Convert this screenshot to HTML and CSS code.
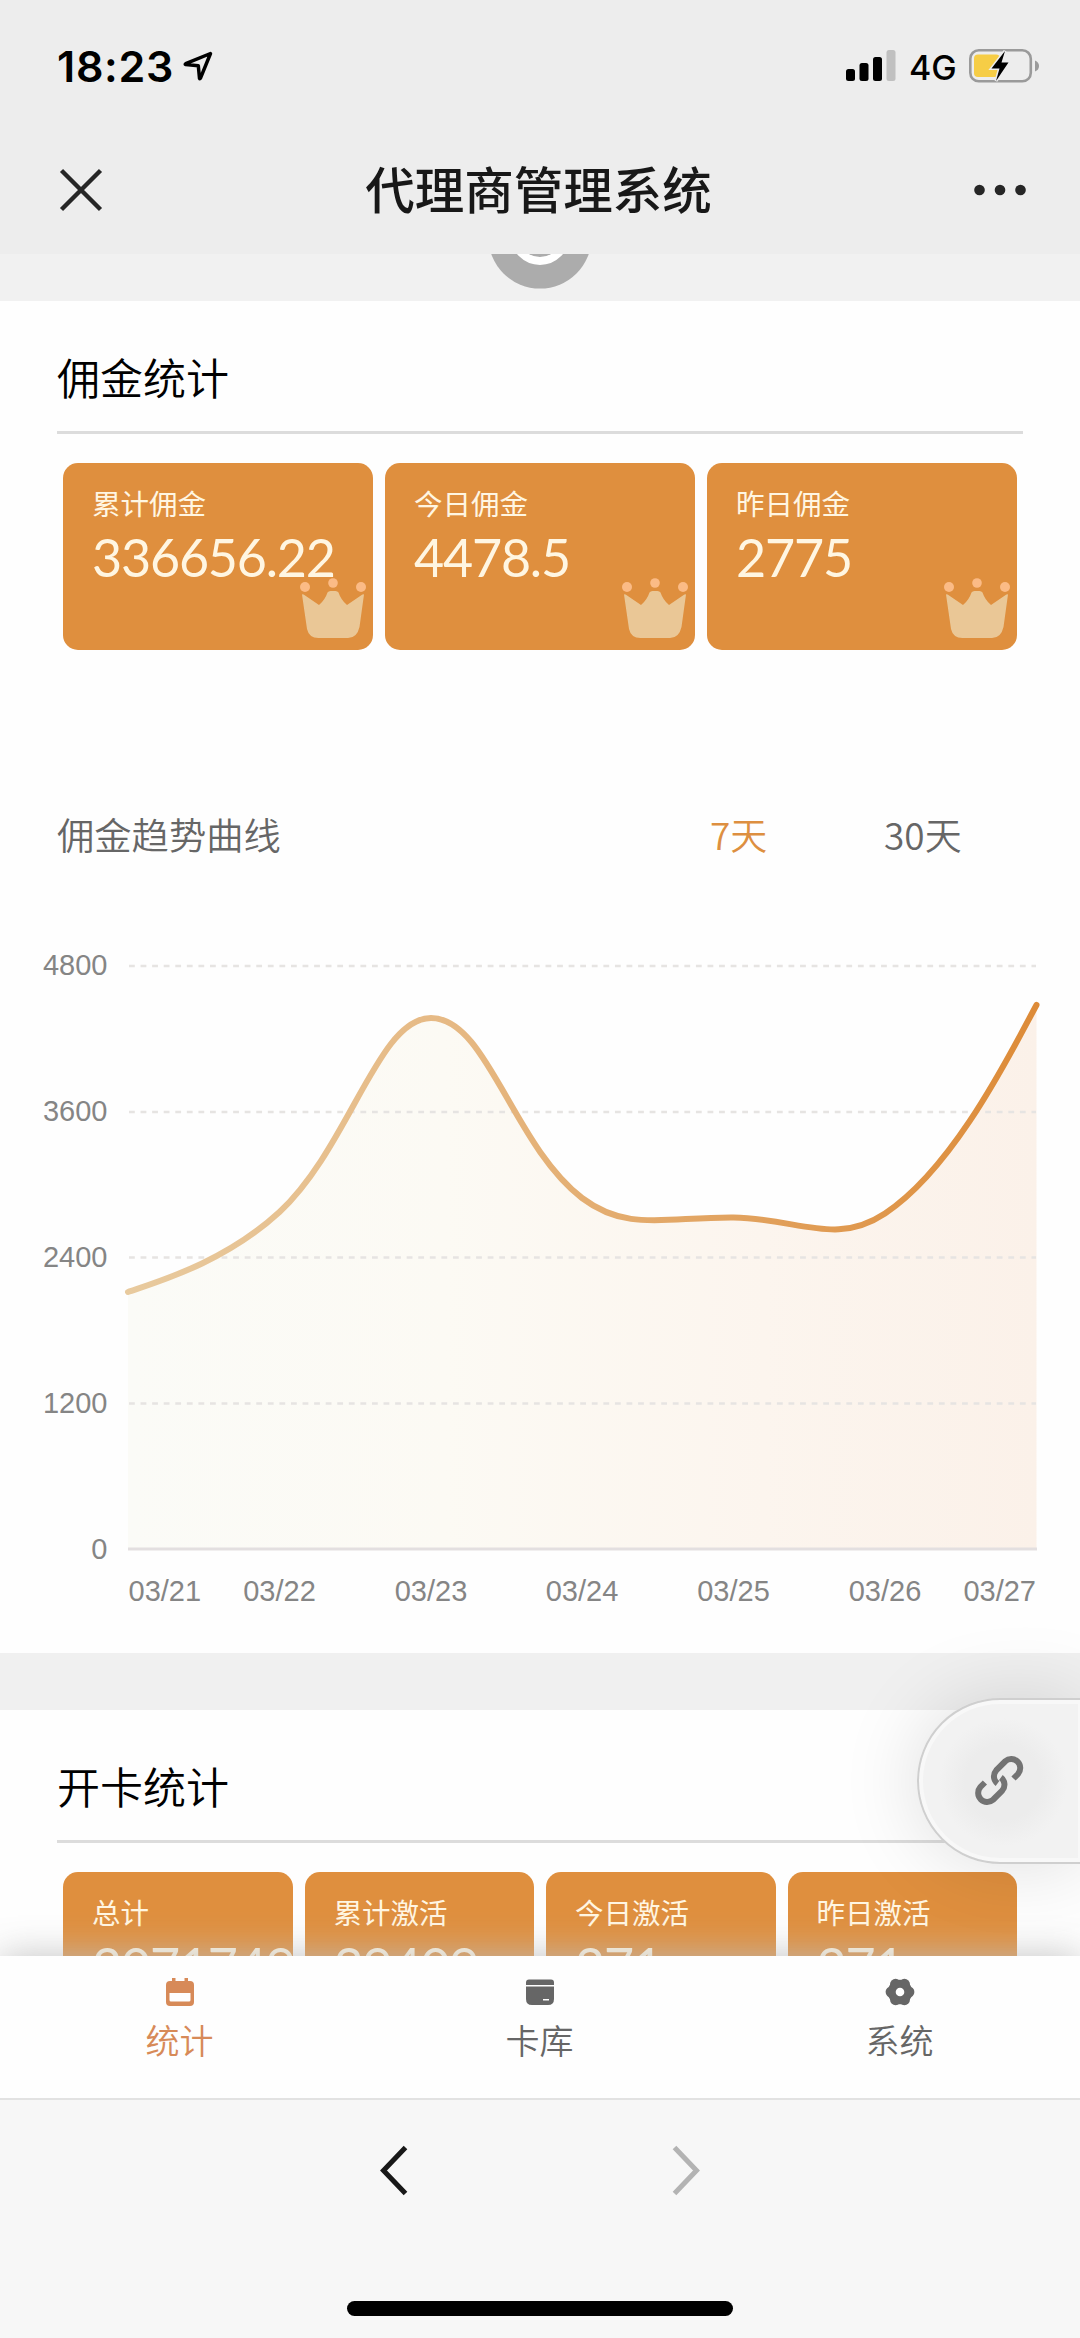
FILE: index.html
```html
<!DOCTYPE html>
<html lang="zh-CN">
<head>
<meta charset="utf-8">
<title>代理商管理系统</title>
<link rel="stylesheet" href="styles.css">
</head>
<body>
<svg class="defs" width="0" height="0" aria-hidden="true">
  <symbol id="crown" viewBox="0 0 68 62">
    <g class="crown-dots"><circle cx="6" cy="10" r="5"/><circle cx="34" cy="6" r="4.8"/><circle cx="62" cy="10" r="5"/></g>
    <path class="crown-body" d="M3 17.5q1-.8 2 .2L20 28q6-5 8.500-12.500 1-1.500 3-1.500h5q2 0 3 1.500Q42 23 48 28l15-10.300q1-1 2-.2L60.500 50Q58 61 49 61H19.500Q10 61 8 52Z"/>
  </symbol>
</svg>
<div class="phone">
  <header class="top">
    <div class="status">
      <div class="clock">
        <span class="time">18:23</span>
        <svg class="locate" width="30" height="30" viewBox="0 0 30 30"><path d="M27.500 2.500 2.700 12.700q-1 .6 0 .9L15.300 14.700 16.500 27.300q.4 1 .9 0Z"/></svg>
      </div>
      <div class="indicators">
        <svg class="signal" width="50" height="32" viewBox="0 0 50 32"><rect x="0" y="19" width="9" height="12" rx="2.500"/><rect x="13.500" y="13" width="9" height="18" rx="2.500"/><rect x="27" y="7" width="9" height="24" rx="2.500"/><rect class="weak" x="40.500" y="0" width="9" height="31" rx="2.500"/></svg>
        <span class="net">4G</span>
        <svg class="battery" width="72" height="36" viewBox="0 0 72 36"><rect class="shell" x="1.300" y="2.300" width="60.500" height="31" rx="8.500"/><rect class="charge" x="5" y="6.500" width="26" height="22.500" rx="4"/><path class="nub" d="M66 12.500q4 1.500 4 5.500t-4 5.500Z"/><path class="bolt" d="M36 3 22.500 20.500H30.500L27 33 39.500 14.500H32.500Z"/></svg>
      </div>
    </div>
    <div class="nav">
      <svg class="close" width="44" height="44" viewBox="0 0 44 44"><path d="M2.500 2.500 41.500 41.500M41.500 2.500 2.500 41.500"/></svg>
      <h1>代理商管理系统</h1>
      <svg class="more" width="52" height="12" viewBox="0 0 52 12"><circle cx="5.500" cy="6" r="5.300"/><circle cx="26" cy="6" r="5.300"/><circle cx="46.500" cy="6" r="5.300"/></svg>
    </div>
  </header>

  <main class="content">
    <div class="peek">
      <svg width="104" height="48" viewBox="0 0 104 48"><circle cx="52" cy="-17" r="51.600" fill="#acacac"/><circle cx="52" cy="-18.500" r="25.500" fill="none" stroke="#fff" stroke-width="8"/></svg>
    </div>

    <section class="panel commission">
      <h2>佣金统计</h2>
      <div class="cards">
        <div class="card"><span class="label">累计佣金</span><span class="value">336656.22</span><svg class="crown"><use href="#crown"/></svg></div>
        <div class="card"><span class="label">今日佣金</span><span class="value">4478.5</span><svg class="crown"><use href="#crown"/></svg></div>
        <div class="card"><span class="label">昨日佣金</span><span class="value">2775</span><svg class="crown"><use href="#crown"/></svg></div>
      </div>
      <div class="trend">
        <h3>佣金趋势曲线</h3>
        <span class="range active">7天</span>
        <span class="range">30天</span>
      </div>
      <svg class="chart" width="1080" height="720" viewBox="0 930 1080 720">
        <defs>
          <linearGradient id="stroke" gradientUnits="userSpaceOnUse" x1="128" y1="0" x2="1036" y2="0"><stop offset="0" stop-color="#e8ca9e"/><stop offset=".35" stop-color="#e6b984"/><stop offset="1" stop-color="#dd8b38"/></linearGradient>
          <linearGradient id="area" gradientUnits="userSpaceOnUse" x1="128" y1="0" x2="1036" y2="0"><stop offset="0" stop-color="#fbfbf7"/><stop offset=".35" stop-color="#fcfaf4"/><stop offset=".7" stop-color="#fcf5ee"/><stop offset="1" stop-color="#fbf1e9"/></linearGradient>
        </defs>
        <path fill="url(#area)" d="M128 1292C160 1281 225 1262 279.500 1212 350 1146 378 1018 431 1018 487 1018 512 1144 582 1198 627 1232 665 1217 733.500 1217.500 800 1219 836 1246 885 1213.500 955 1167 1012 1050 1036.500 1005V1549H128Z"/>
        <g class="grid"><path d="M129 966H1036M129 1112H1036M129 1257.500H1036M129 1403.500H1036"/></g>
        <path class="axis" d="M128 1549H1037"/>
        <path class="line" stroke="url(#stroke)" d="M128 1292C160 1281 225 1262 279.500 1212 350 1146 378 1018 431 1018 487 1018 512 1144 582 1198 627 1232 665 1217 733.500 1217.500 800 1219 836 1246 885 1213.500 955 1167 1012 1050 1036.500 1005"/>
        <g class="ticks y"><text x="107.500" y="975">4800</text><text x="107.500" y="1121">3600</text><text x="107.500" y="1267">2400</text><text x="107.500" y="1412.500">1200</text><text x="107.500" y="1558.500">0</text></g>
        <g class="ticks x"><text class="first" x="128.500" y="1601">03/21</text><text x="279.500" y="1601">03/22</text><text x="431" y="1601">03/23</text><text x="582" y="1601">03/24</text><text x="733.500" y="1601">03/25</text><text x="885" y="1601">03/26</text><text class="last" x="1036" y="1601">03/27</text></g>
      </svg>
    </section>

    <section class="panel activation">
      <h2>开卡统计</h2>
      <div class="cards">
        <div class="card"><span class="label">总计</span><span class="value">2071749</span></div>
        <div class="card"><span class="label">累计激活</span><span class="value">39409</span></div>
        <div class="card"><span class="label">今日激活</span><span class="value">271</span></div>
        <div class="card"><span class="label">昨日激活</span><span class="value">271</span></div>
      </div>
    </section>
    <div class="float">
      <svg width="54" height="54" viewBox="0 0 54 54"><path d="M41.500 23.500 46 19A9 9 0 0 0 33.300 6.300L24.200 15.400A9 9 0 0 0 25.500 28.500"/><path transform="rotate(180 27.200 25.500)" d="M41.500 23.500 46 19A9 9 0 0 0 33.300 6.300L24.200 15.400A9 9 0 0 0 25.500 28.500"/></svg>
    </div>
  </main>

  <nav class="tabs">
    <a class="tab active">
      <svg width="30" height="30" viewBox="0 0 30 30"><path fill="currentColor" fill-rule="evenodd" d="M7 1h3.500v3h9V1H23v3h2q4 0 4 4v17q0 4-4 4H5q-4 0-4-4V8q0-4 4-4h2ZM4.500 16v7q0 1.500 1.500 1.500h18q1.500 0 1.500-1.500v-7Z"/></svg>
      <span>统计</span>
    </a>
    <a class="tab">
      <svg width="30" height="30" viewBox="0 0 30 30"><path fill="currentColor" fill-rule="evenodd" d="M4 2.500h22q3 0 3 3V8H1V5.500q0-3 3-3ZM1 9.500h28V22q0 6-6 6H7q-6 0-6-6ZM18 22v1.500H24V22Z"/></svg>
      <span>卡库</span>
    </a>
    <a class="tab">
      <svg width="30" height="30" viewBox="0 0 30 30"><g fill="currentColor"><circle cx="15" cy="15" r="12.300"/><circle cx="23.800" cy="15" r="5.600"/><circle cx="19.400" cy="7.400" r="5.600"/><circle cx="10.600" cy="7.400" r="5.600"/><circle cx="6.200" cy="15" r="5.600"/><circle cx="10.600" cy="22.600" r="5.600"/><circle cx="19.400" cy="22.600" r="5.600"/></g><circle cx="15" cy="15" r="4.300" fill="#fff"/></svg>
      <span>系统</span>
    </a>
  </nav>

  <footer class="browser">
    <div class="history">
      <svg width="30" height="54" viewBox="0 0 30 54"><path stroke="#181818" d="M25.500 3.500 3.500 26.500l22 23"/></svg>
      <svg width="30" height="54" viewBox="0 0 30 54"><path stroke="#b3b3b3" d="M4.500 3.500l22 23-22 23"/></svg>
    </div>
    <div class="home"></div>
  </footer>
</div>
</body>
</html>
```
FILE: styles.css
```css
* { box-sizing: border-box; }
body { margin: 0; background: #f0f0f0; font-family: "Noto Sans CJK SC", sans-serif; color: #000; }
h1, h2, h3 { margin: 0; font-weight: 400; }
.defs { display: block; height: 0; }
svg { display: block; flex: none; }
.phone { width: 1080px; height: 2338px; display: flex; flex-direction: column; overflow: hidden; }

.top { height: 254px; background: #ededed; flex: none; }
.status { height: 132px; padding: 0 39px 0 57px; display: flex; justify-content: space-between; align-items: center; font-family: Inter, sans-serif; }
.clock, .indicators { display: flex; align-items: center; }
.clock { gap: 9px; }
.time { font-size: 43px; font-weight: 600; line-height: 52px; width: 117px; white-space: nowrap; letter-spacing: .7px; }
.locate { fill: none; stroke: #000; stroke-width: 3.5; stroke-linejoin: round; }
.signal .weak { fill: #c0c0c0; }
.net { font-size: 34px; font-weight: 450; line-height: 40px; margin: 3px 12px 0 13px; width: 48px; }
.shell { fill: none; stroke: #9a9a9a; stroke-width: 2.6; }
.charge { fill: #f6cd46; }
.nub { fill: #9a9a9a; }
.bolt { fill: #000; stroke: #ededed; stroke-width: 3; paint-order: stroke; }
.nav { height: 115px; padding: 0 54px 0 59px; display: flex; justify-content: space-between; align-items: center; }
.close { fill: none; stroke: #262626; stroke-width: 4.4; }
.nav h1 { font-size: 49.500px; font-weight: 500; line-height: 72px; margin-top: -4px; color: #181818; }
.more { fill: #262626; }

.content { height: 1702px; position: relative; overflow: hidden; flex: none; }
.peek { height: 47px; display: flex; justify-content: center; background: #f1f1f1; overflow: hidden; }
.panel { background: #fefefe; padding-top: 44px; }
.commission { height: 1352px; }
.activation { height: 400px; margin-top: 57px; }
.panel h2 { margin: 0 57px; height: 89px; border-bottom: 3px solid #dcdcdc; font-size: 43px; line-height: 62px; font-weight: 350; }
.cards { display: flex; gap: 12px; margin: 29px 63px 0; }
.card { position: relative; flex: 1 1 0; min-width: 0; height: 187px; padding: 20px 0 0 29px; border-radius: 15px; background: #df8f3e; color: #fff6e2; overflow: hidden; display: flex; flex-direction: column; }
.label { font-size: 28.500px; line-height: 40px; }
.value { font-family: Lato, sans-serif; font-size: 52px; line-height: 62px; letter-spacing: -1.200px; margin-top: 3px; }
.crown { position: absolute; right: 6px; bottom: 11px; width: 68px; height: 62px; }
.crown-body { fill: #eac796; }
.crown-dots { fill: #fbbb86; }
.trend { display: flex; align-items: center; margin: 157px 57px 0; height: 54px; font-size: 37px; line-height: 54px; color: #666; font-weight: 350; }
.trend h3 { flex: none; width: 653px; font-size: 37.300px; font-weight: 350; }
.range { flex: none; width: 174px; white-space: nowrap; }
.range.active { color: #dd8f40; }
.chart { margin-top: 69px; }
.grid path { stroke: #e6e4e2; stroke-width: 2.500; stroke-dasharray: 5.800 5.770; }
.axis { stroke: #e3dfe0; stroke-width: 3; }
.line { fill: none; stroke-width: 6; stroke-linecap: round; }
.ticks { font-family: "Liberation Sans", sans-serif; font-size: 29px; fill: #858585; }
.ticks.y { text-anchor: end; }
.ticks.x { text-anchor: middle; }
.ticks .first { text-anchor: start; }
.ticks .last { text-anchor: end; }

.float { position: absolute; right: -4px; top: 1444px; width: 167px; height: 166px; border: 2px solid #cfcfcf; border-radius: 83px 0 0 83px; background: radial-gradient(circle at 84px 82px, #ececec 0 38px, #f2f2f2 64px); box-shadow: 0 0 80px rgba(0, 0, 0, .13), inset 0 0 0 4px #f8f8f8; display: flex; align-items: center; padding-left: 53px; }
.float svg { fill: none; stroke: #737373; stroke-width: 6; margin-top: 2px; }

.tabs { position: relative; height: 144px; flex: none; background: #fefefe; border-bottom: 2px solid #e2e2e2; box-shadow: 0 0 36px rgba(190, 190, 190, .9); display: flex; }
.tab { flex: 1; display: flex; flex-direction: column; align-items: center; padding-top: 21px; color: #666; font-size: 34px; line-height: 50px; font-weight: 350; }
.tab span { margin: 8px 1px 0 0; }
.tab.active { color: #d78a58; }
.browser { flex: 1; position: relative; background: #f7f7f7; display: flex; flex-direction: column; align-items: center; justify-content: space-between; padding: 44px 0 22px; }
.history { width: 320px; display: flex; justify-content: space-between; }
.history path { fill: none; stroke-width: 5; }
.home { width: 386px; height: 15px; border-radius: 8px; background: #000; }
```
